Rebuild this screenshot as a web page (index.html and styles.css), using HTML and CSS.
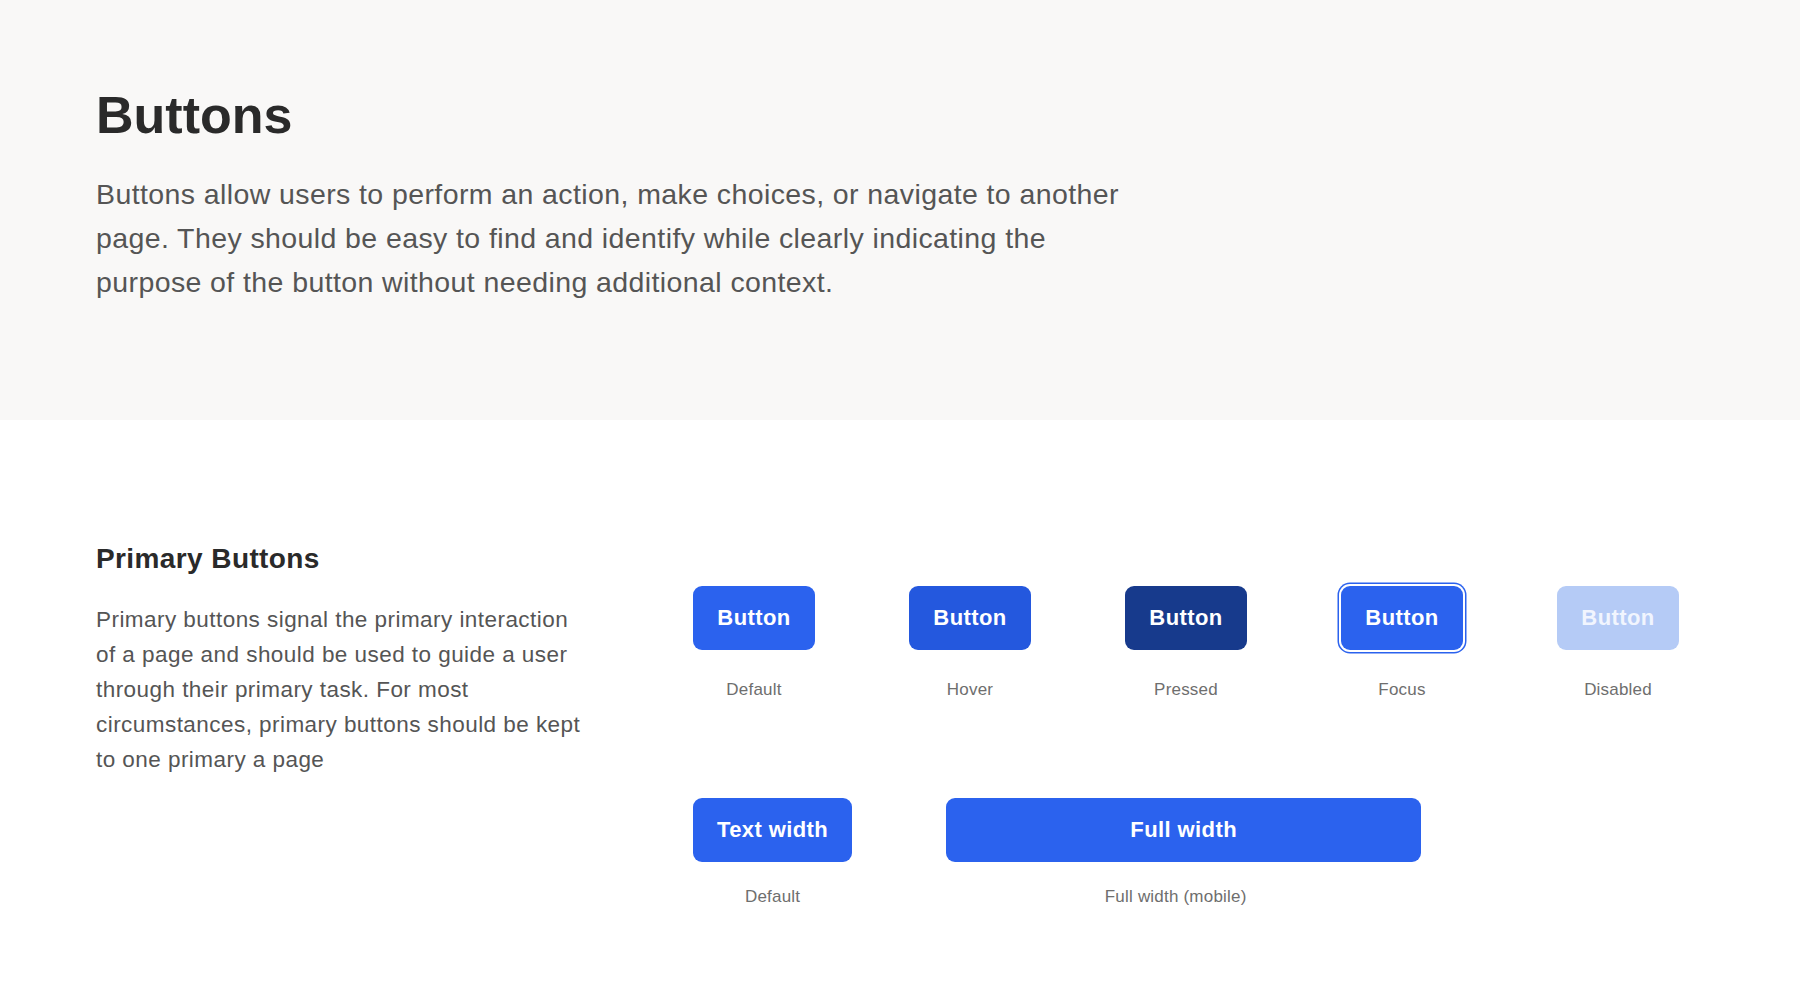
FILE: index.html
```html
<!DOCTYPE html>
<html lang="en">
<head>
<meta charset="utf-8">
<title>Buttons</title>
<link rel="stylesheet" href="styles.css">
</head>
<body>
  <header class="intro">
    <h1 class="intro-title">Buttons</h1>
    <p class="intro-text">Buttons allow users to perform an action, make choices, or navigate to another page. They should be easy to find and identify while clearly indicating the purpose of the button without needing additional context.</p>
  </header>

  <section class="group">
    <div class="group-info">
      <h2 class="group-title">Primary Buttons</h2>
      <p class="group-text">Primary buttons signal the primary interaction of a page and should be used to guide a user through their primary task. For most circumstances, primary buttons should be kept to one primary a page</p>
    </div>

    <div class="demo">
      <div class="demo-row">
        <div class="demo-item">
          <button class="btn">Button</button>
          <span class="demo-label">Default</span>
        </div>
        <div class="demo-item">
          <button class="btn btn-hover">Button</button>
          <span class="demo-label">Hover</span>
        </div>
        <div class="demo-item">
          <button class="btn btn-pressed">Button</button>
          <span class="demo-label">Pressed</span>
        </div>
        <div class="demo-item">
          <button class="btn btn-focus">Button</button>
          <span class="demo-label">Focus</span>
        </div>
        <div class="demo-item">
          <button class="btn btn-disabled">Button</button>
          <span class="demo-label">Disabled</span>
        </div>
      </div>

      <div class="demo-row demo-row-sizes">
        <div class="demo-item">
          <button class="btn">Text width</button>
          <span class="demo-label">Default</span>
        </div>
        <div class="demo-item demo-item-full">
          <button class="btn btn-full">Full width</button>
          <span class="demo-label demo-label-shift">Full width (mobile)</span>
        </div>
      </div>
    </div>
  </section>
</body>
</html>
```

FILE: styles.css
```css
* {
  box-sizing: border-box;
}

html, body {
  margin: 0;
  padding: 0;
  background: #ffffff;
}

body {
  font-family: "Liberation Sans", Arial, Helvetica, sans-serif;
  color: #2b2b2b;
}

.intro {
  background: #f9f8f7;
  height: 420px;
  padding: 84px 96px 0;
}

.intro-title {
  margin: 0;
  font-size: 52px;
  line-height: 62px;
  font-weight: 700;
  color: #2a2a2a;
}

.intro-text {
  margin: 26px 0 0;
  max-width: 1045px;
  font-size: 28.5px;
  letter-spacing: 0.4px;
  line-height: 44px;
  color: #555555;
}

.group {
  display: flex;
  padding: 122px 96px 80px;
}

.group-info {
  width: 500px;
  flex: none;
}

.group-title {
  margin: 0;
  font-size: 28px;
  letter-spacing: 0.4px;
  line-height: 34px;
  font-weight: 700;
  color: #2a2a2a;
}

.group-text {
  margin: 26px 0 0;
  width: 489px;
  font-size: 22.5px;
  letter-spacing: 0.45px;
  line-height: 35px;
  color: #555555;
}

.demo {
  margin-left: 97px;
  padding-top: 44px;
  display: flex;
  flex-direction: column;
  gap: 98px;
}

.demo-row {
  display: flex;
  gap: 94px;
}

.demo-item {
  display: flex;
  flex-direction: column;
  align-items: center;
  gap: 30px;
}

.demo-row-sizes .demo-item {
  gap: 25px;
}

.demo-item-full .btn-full {
  width: 475px;
}

.btn {
  font-family: "Liberation Sans", Arial, Helvetica, sans-serif;
  font-size: 22px;
  font-weight: 700;
  letter-spacing: 0.4px;
  line-height: 26px;
  color: #ffffff;
  background: #2b62ee;
  border: none;
  border-radius: 9px;
  height: 64px;
  padding: 0 24px;
  min-width: 122px;
  cursor: pointer;
}

.btn-hover {
  background: #2458de;
}

.btn-pressed {
  background: #173a8c;
}

.btn-focus {
  box-shadow: 0 0 0 2px #ffffff, 0 0 0 3.5px #2b62ee;
}

.btn-disabled {
  background: #b5cbf6;
  color: #f1f5fe;
}

.demo-label {
  font-size: 17px;
  letter-spacing: 0.2px;
  line-height: 20px;
  color: #6e6e6e;
}

.demo-label-shift {
  margin-right: 16px;
}
```
